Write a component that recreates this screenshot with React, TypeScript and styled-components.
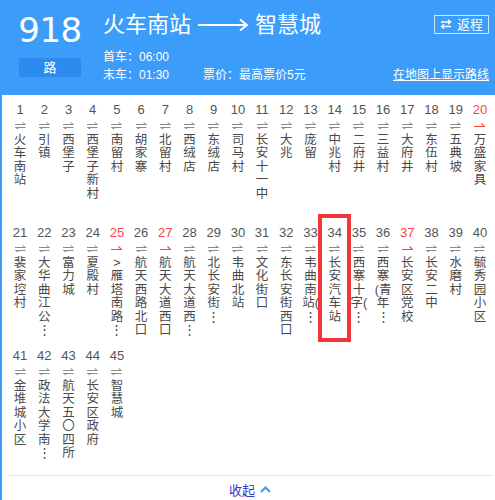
import React from 'react'
import styled, { createGlobalStyle } from 'styled-components'

type StopType = {
	n: number
	name: string
	red?: boolean
	current?: boolean
}

const stops: StopType[] = [
	{ n: 1, name: '火车南站' },
	{ n: 2, name: '引镇' },
	{ n: 3, name: '西堡子' },
	{ n: 4, name: '西堡子新村' },
	{ n: 5, name: '南留村' },
	{ n: 6, name: '胡家寨' },
	{ n: 7, name: '北留村' },
	{ n: 8, name: '西绒店' },
	{ n: 9, name: '东绒店' },
	{ n: 10, name: '司马村' },
	{ n: 11, name: '长安十一中' },
	{ n: 12, name: '大兆' },
	{ n: 13, name: '庞留' },
	{ n: 14, name: '中兆村' },
	{ n: 15, name: '二府井' },
	{ n: 16, name: '三益村' },
	{ n: 17, name: '大府井' },
	{ n: 18, name: '东伍村' },
	{ n: 19, name: '五典坡' },
	{ n: 20, name: '万盛家具', red: true },
	{ n: 21, name: '裴家埪村' },
	{ n: 22, name: '大华曲江公…' },
	{ n: 23, name: '富力城' },
	{ n: 24, name: '夏殿村' },
	{ n: 25, name: '>雁塔南路…', red: true },
	{ n: 26, name: '航天西路北口' },
	{ n: 27, name: '航天大道西口', red: true },
	{ n: 28, name: '航天大道西…' },
	{ n: 29, name: '北长安街…' },
	{ n: 30, name: '韦曲北站' },
	{ n: 31, name: '文化街口' },
	{ n: 32, name: '东长安街西口' },
	{ n: 33, name: '韦曲南站(…' },
	{ n: 34, name: '长安汽车站', current: true },
	{ n: 35, name: '西寨十字(…' },
	{ n: 36, name: '西寨(青年…' },
	{ n: 37, name: '长安区党校', red: true },
	{ n: 38, name: '长安二中' },
	{ n: 39, name: '水磨村' },
	{ n: 40, name: '毓秀园小区' },
	{ n: 41, name: '金堆城小区' },
	{ n: 42, name: '政法大学南…' },
	{ n: 43, name: '航天五〇四所' },
	{ n: 44, name: '长安区政府' },
	{ n: 45, name: '智慧城' },
]

// one character per line, an opening paren sticks to its neighbour
const toLines = (name: string) => {
	const chars = Array.from(name)
	const lines: string[] = []
	for (let i = 0; i < chars.length; i++) {
		const c = chars[i]
		if (c === '…') {
			lines.push('⋮')
		} else if (c === '(') {
			const next = chars[i + 1]
			if (next && next !== '…') {
				lines.push('(' + next)
				i++
			} else if (lines.length) {
				lines[lines.length - 1] += '('
			}
		} else {
			lines.push(c)
		}
	}
	return lines
}

const BothWays = () => (
	<svg width="11" height="7" viewBox="0 0 11 7" fill="none" stroke="#8a8a8a" strokeWidth="1">
		<path d="M0 2.5H10.5L7.5 0.5" />
		<path d="M10.5 5.5H0.5L3.5 7" />
	</svg>
)

const OneWay = () => (
	<svg width="11" height="7" viewBox="0 0 11 7" fill="none" stroke="#f44848" strokeWidth="1.2">
		<path d="M0 4.5H10.5L7.5 1.5" />
	</svg>
)

const LongArrow = () => (
	<svg width="52" height="14" viewBox="0 0 52 14" fill="none" stroke="#fff" strokeWidth="2">
		<path d="M1 7H50" />
		<path d="M43 1.5L50 7L43 12.5" />
	</svg>
)

const SwapIcon = () => (
	<svg width="12" height="10" viewBox="0 0 12 10" fill="none" stroke="#fff" strokeWidth="1.3">
		<path d="M1 3H10.5M8 0.8L10.5 3L8 5.2" />
		<path d="M11 7.5H1.5M4 5.3L1.5 7.5L4 9.7" />
	</svg>
)

const Chevron = () => (
	<svg width="11" height="7" viewBox="0 0 11 7" fill="none" stroke="#3d9bf8" strokeWidth="2">
		<path d="M1 6L5.5 1.5L10 6" />
	</svg>
)

export default function App() {
	return (
		<>
			<GlobalStyle />
			<Page>
				<Header>
					<LineBlock>
						<LineNumber>918</LineNumber>
						<LineTag>路</LineTag>
					</LineBlock>
					<Info>
						<TitleRow>
							<Title>火车南站</Title>
							<LongArrow />
							<Title>智慧城</Title>
							<ReturnButton>
								<SwapIcon />
								返程
							</ReturnButton>
						</TitleRow>
						<InfoRow>
							<InfoText>首车：06:00</InfoText>
						</InfoRow>
						<InfoRow>
							<InfoText $width={100}>末车：01:30</InfoText>
							<InfoText>票价：最高票价5元</InfoText>
							<MapLink>在地图上显示路线</MapLink>
						</InfoRow>
					</Info>
				</Header>
				<Body>
					<StopsGrid>
						{stops.map(stop => (
							<Stop key={stop.n} $current={stop.current}>
								<StopNumber $red={stop.red}>{stop.n}</StopNumber>
								<ArrowSlot>{stop.red ? <OneWay /> : <BothWays />}</ArrowSlot>
								<StopName>
									{toLines(stop.name).map((line, i) => (
										<NameLine key={i}>{line}</NameLine>
									))}
								</StopName>
							</Stop>
						))}
					</StopsGrid>
					<Footer>
						<Collapse>收起</Collapse>
						<Chevron />
					</Footer>
				</Body>
			</Page>
		</>
	)
}

const GlobalStyle = createGlobalStyle`
	body {
		margin: 0;
		background: #fff;
		font-family: "Liberation Sans", "Noto Sans CJK SC", sans-serif;
		overflow: hidden;
	}
`

const Page = styled.div`
	width: 495px;
`

const Header = styled.div`
	height: 95px;
	box-sizing: border-box;
	background: #3c9cfa;
	color: #fff;
	display: flex;
	padding: 10px 6px 0 17px;
`

const LineBlock = styled.div`
	width: 66px;
	display: flex;
	flex-direction: column;
	align-items: center;
`

const LineNumber = styled.div`
	font-family: "DejaVu Sans", sans-serif;
	font-size: 34px;
	line-height: 40px;
	letter-spacing: -0.5px;
`

const LineTag = styled.div`
	margin-top: 8px;
	width: 62px;
	height: 19px;
	background: #2d8bef;
	font-size: 13px;
	line-height: 19px;
	text-align: center;
`

const Info = styled.div`
	flex: 1;
	margin-left: 20px;
	display: flex;
	flex-direction: column;
`

const TitleRow = styled.div`
	display: flex;
	align-items: center;
	gap: 6px;
	height: 30px;
	margin-bottom: 6px;
`

const Title = styled.div`
	font-size: 22px;
	line-height: 28px;
`

const ReturnButton = styled.div`
	margin-left: auto;
	margin-top: -2px;
	display: flex;
	align-items: center;
	gap: 5px;
	height: 17px;
	padding: 0 5px;
	border: 1px solid rgba(255, 255, 255, 0.75);
	font-size: 13px;
	line-height: 17px;
`

const InfoRow = styled.div`
	display: flex;
	height: 18px;
	align-items: center;
`

const InfoText = styled.div<{ $width?: number }>`
	font-size: 12px;
	width: ${p => (p.$width ? `${p.$width}px` : 'auto')};
`

const MapLink = styled.div`
	margin-left: auto;
	font-size: 12px;
	text-decoration: underline;
`

const Body = styled.div`
	border-left: 2px solid #3c9cfa;
	padding: 7px 3px 0 6px;
`

const StopsGrid = styled.div`
	display: grid;
	grid-template-columns: repeat(20, 1fr);
	grid-auto-rows: 123px;
`

const Stop = styled.div<{ $current?: boolean }>`
	position: relative;
	display: flex;
	flex-direction: column;
	align-items: center;

	${p =>
		p.$current &&
		`
		&::after {
			content: '';
			position: absolute;
			top: -11px;
			bottom: 6px;
			left: -5px;
			right: -4px;
			border: 4px solid #f3363a;
		}
	`}
`

const StopNumber = styled.div<{ $red?: boolean }>`
	font-size: 13px;
	line-height: 15px;
	color: ${p => (p.$red ? '#f44848' : '#555')};
`

const ArrowSlot = styled.div`
	margin-top: 5px;
	height: 7px;
	display: flex;
`

const StopName = styled.div`
	margin-top: 5px;
	display: flex;
	flex-direction: column;
	align-items: center;
	font-size: 12.5px;
	line-height: 13.4px;
	color: #4a4a4a;
`

const NameLine = styled.span`
	white-space: nowrap;
`

const Footer = styled.div`
	margin-top: 4px;
	border-top: 1px solid #e6e6e6;
	display: flex;
	justify-content: center;
	align-items: center;
	gap: 5px;
	height: 26px;
`

const Collapse = styled.span`
	font-size: 13px;
	color: #3535c9;
`
